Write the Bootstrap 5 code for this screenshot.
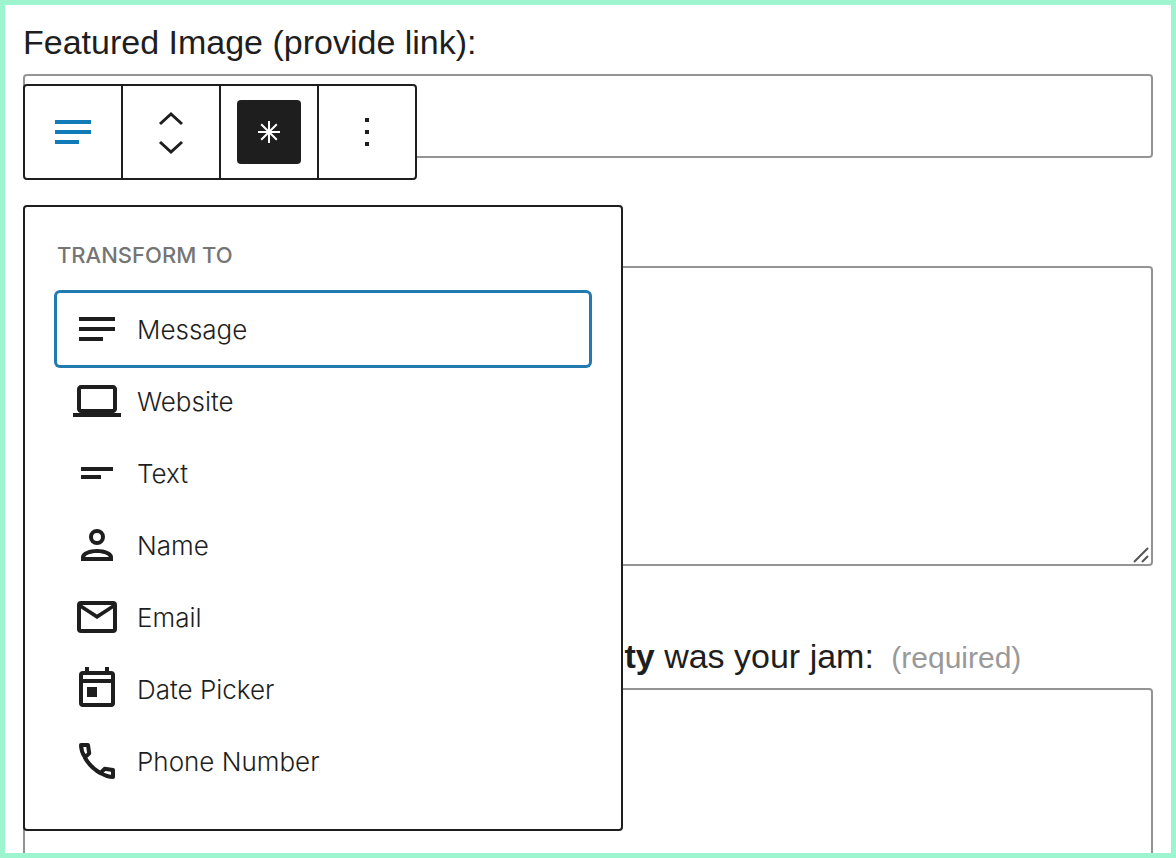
<!DOCTYPE html>
<html lang="en">
<head>
<meta charset="utf-8">
<meta name="viewport" content="width=device-width, initial-scale=1">
<title>Form block editor</title>
<link href="https://cdn.jsdelivr.net/npm/bootstrap@5.3.0/dist/css/bootstrap.min.css" rel="stylesheet">
<style>
  :root { --ink: #1e1e1e; --accent: #237ab0; --line: #949494; }
  body { color: var(--ink); background: #fff; font-family: "Liberation Sans", Arial, sans-serif; }
  .canvas-frame { border: 5px solid #9df5cf; padding: 13px 18px 0; }
  .field-label { font-size: 34px; line-height: 48px; padding-bottom: 8px; }
  .field-label .hint { font-size: 30px; color: #999; margin-left: 8px; }
  .label-tail { padding: 2px 0 6px 592px; }
  .field-box { border: 2px solid var(--line); border-radius: 4px; background: #fff; resize: none; }
  .field-box.one-line { height: 84px; }
  .field-box.multi-line { height: 300px; }
  .grip { right: 2px; bottom: 2px; }
  .block-tools { top: 79px; left: 18px; gap: 25px; font-family: Inter, sans-serif; }
  .tool-strip, .transform-menu { background: #fff; border: 2px solid var(--ink); border-radius: 4px; }
  .tool-strip button { width: 96px; height: 92px; color: var(--ink); }
  .tool-strip .cell + .cell { border-left: 2px solid var(--ink); }
  .tool-strip .type-icon { color: #117ab8; }
  .tool-strip .tile { width: 64px; height: 64px; border-radius: 4px; background: var(--ink); color: #fff; }
  .tool-strip .mover { height: 46px; }
  .transform-menu { width: 600px; padding: 32px; height: 626px; }
  .menu-title { font-size: 22px; line-height: 32px; font-weight: 500; color: #757575; margin-bottom: 22px; }
  .menu-row { height: 72px; padding: 0 16px; gap: 16px; font-size: 26px; font-weight: 350; color: var(--ink); border-radius: 3px; }
  .menu-row.current { box-shadow: 0 0 0 3px var(--accent); }
  svg { display: block; flex: none; fill: currentColor; }
</style>
</head>
<body>
<main class="canvas-frame vh-100 overflow-hidden position-relative">
  <form>
    <div class="mb-5">
      <label class="field-label d-block" for="image">Featured Image (provide link):</label>
      <input class="field-box one-line d-block w-100 px-3" id="image" type="text">
    </div>
    <div class="position-relative pt-5">
      <div class="pt-2 mt-1">
        <textarea class="field-box multi-line d-block w-100 p-3" aria-label="Message"></textarea>
      </div>
      <svg class="grip position-absolute" width="20" height="20" viewBox="0 0 20 20" aria-hidden="true"><path d="M3 18 17 4M11 18l6-6" fill="none" stroke="#555" stroke-width="2"/></svg>
    </div>
    <div class="pt-5 mt-3">
      <label class="field-label label-tail d-block text-nowrap" for="jam"><b>ity</b> was your jam: <span class="hint">(required)</span></label>
      <textarea class="field-box multi-line d-block w-100 p-3" id="jam"></textarea>
    </div>
  </form>

  <div class="block-tools position-absolute d-flex flex-column align-items-start">
    <div class="tool-strip d-flex" role="toolbar" aria-label="Block tools">
      <div class="cell">
        <button class="btn p-0 border-0 rounded-0 d-flex align-items-center justify-content-center type-icon" type="button" aria-label="Change block type">
          <svg width="48" height="48" viewBox="0 0 24 24"><path d="M3 6h18v2H3zM3 11h18v2H3zM3 16h12v2H3z"/></svg>
        </button>
      </div>
      <div class="cell">
        <button class="mover btn p-0 border-0 rounded-0 d-flex align-items-end justify-content-center" type="button" aria-label="Move up">
          <svg width="28" height="24" viewBox="0 0 28 24"><path d="m3 16 11-10 11 10" fill="none" stroke="currentColor" stroke-width="3"/></svg>
        </button>
        <button class="mover btn p-0 border-0 rounded-0 d-flex align-items-start justify-content-center" type="button" aria-label="Move down">
          <svg width="28" height="24" viewBox="0 0 28 24"><path d="m3 10 11 10 11-10" fill="none" stroke="currentColor" stroke-width="3"/></svg>
        </button>
      </div>
      <div class="cell">
        <button class="btn p-0 border-0 rounded-0 d-flex align-items-center justify-content-center" type="button" aria-label="Required">
          <span class="tile d-flex align-items-center justify-content-center">
            <svg width="24" height="24" viewBox="0 0 24 24"><path d="M12 1v22M1 12h22M4.200 4.200l15.600 15.600M19.800 4.200 4.200 19.800" stroke="currentColor" stroke-width="2"/></svg>
          </span>
        </button>
      </div>
      <div class="cell">
        <button class="btn p-0 border-0 rounded-0 d-flex align-items-center justify-content-center" type="button" aria-label="Options">
          <svg width="48" height="48" viewBox="0 0 24 24"><path d="M11 5h2v2h-2zM11 11h2v2h-2zM11 17h2v2h-2z"/></svg>
        </button>
      </div>
    </div>

    <div class="transform-menu">
      <div class="menu-title">TRANSFORM TO</div>
      <div class="d-flex flex-column" role="menu">
        <button class="menu-row current btn border-0 d-flex align-items-center text-start" type="button" role="menuitem">
          <svg width="48" height="48" viewBox="0 0 24 24"><path d="M3 6h18v2H3zM3 11h18v2H3zM3 16h12v2H3z"/></svg>Message
        </button>
        <button class="menu-row btn border-0 d-flex align-items-center text-start" type="button" role="menuitem">
          <svg width="48" height="48" viewBox="0 0 24 24"><path d="M20 18c1.100 0 1.990-.9 1.990-2L22 6c0-1.100-.9-2-2-2H4c-1.100 0-2 .9-2 2v10c0 1.100.9 2 2 2H0v2h24v-2h-4zM4 6h16v10H4V6z"/></svg>Website
        </button>
        <button class="menu-row btn border-0 d-flex align-items-center text-start" type="button" role="menuitem">
          <svg width="48" height="48" viewBox="0 0 24 24"><path d="M4 9h16v2H4zM4 13h10v2H4z"/></svg>Text
        </button>
        <button class="menu-row btn border-0 d-flex align-items-center text-start" type="button" role="menuitem">
          <svg width="48" height="48" viewBox="0 0 24 24"><path fill-rule="evenodd" d="M12 4a4 4 0 1 0 0 8 4 4 0 0 0 0-8zm0 2a2 2 0 1 1 0 4 2 2 0 0 1 0-4zM4 20v-2c0-2.400 4-4 8-4s8 1.600 8 4v2zm2-2h12c-.7-1.200-3.200-2-6-2s-5.300.8-6 2z"/></svg>Name
        </button>
        <button class="menu-row btn border-0 d-flex align-items-center text-start" type="button" role="menuitem">
          <svg width="48" height="48" viewBox="0 0 24 24"><path fill-rule="evenodd" d="M4 4h16a2 2 0 0 1 2 2v12a2 2 0 0 1-2 2H4a2 2 0 0 1-2-2V6a2 2 0 0 1 2-2zm.6 2L12 10.700 19.400 6zM4 7.800V18h16V7.800l-8 5.200z"/></svg>Email
        </button>
        <button class="menu-row btn border-0 d-flex align-items-center text-start" type="button" role="menuitem">
          <svg width="48" height="48" viewBox="0 0 24 24"><path fill-rule="evenodd" d="M19 3h-1V1h-2v2H8V1H6v2H5a2 2 0 0 0-2 2v14a2 2 0 0 0 2 2h14a2 2 0 0 0 2-2V5a2 2 0 0 0-2-2zm0 16H5V9h14zm0-12H5V5h14zM7 11h5v5H7z"/></svg>Date Picker
        </button>
        <button class="menu-row btn border-0 d-flex align-items-center text-start" type="button" role="menuitem">
          <svg width="48" height="48" viewBox="0 0 24 24"><path d="M4 4h3.500l.6 4.200L6 10.200C4.700 8.200 4 6 4 4zM20 20v-3.500l-4.200-.6L13.800 18c2 1.200 4.200 2 6.200 2zM5.800 10c2 3.800 4.400 6.200 8.200 8.200" fill="none" stroke="currentColor" stroke-width="2" stroke-linejoin="round"/></svg>Phone Number
        </button>
      </div>
    </div>
  </div>
</main>
<script src="https://cdn.jsdelivr.net/npm/bootstrap@5.3.0/dist/js/bootstrap.bundle.min.js"></script>
</body>
</html>
